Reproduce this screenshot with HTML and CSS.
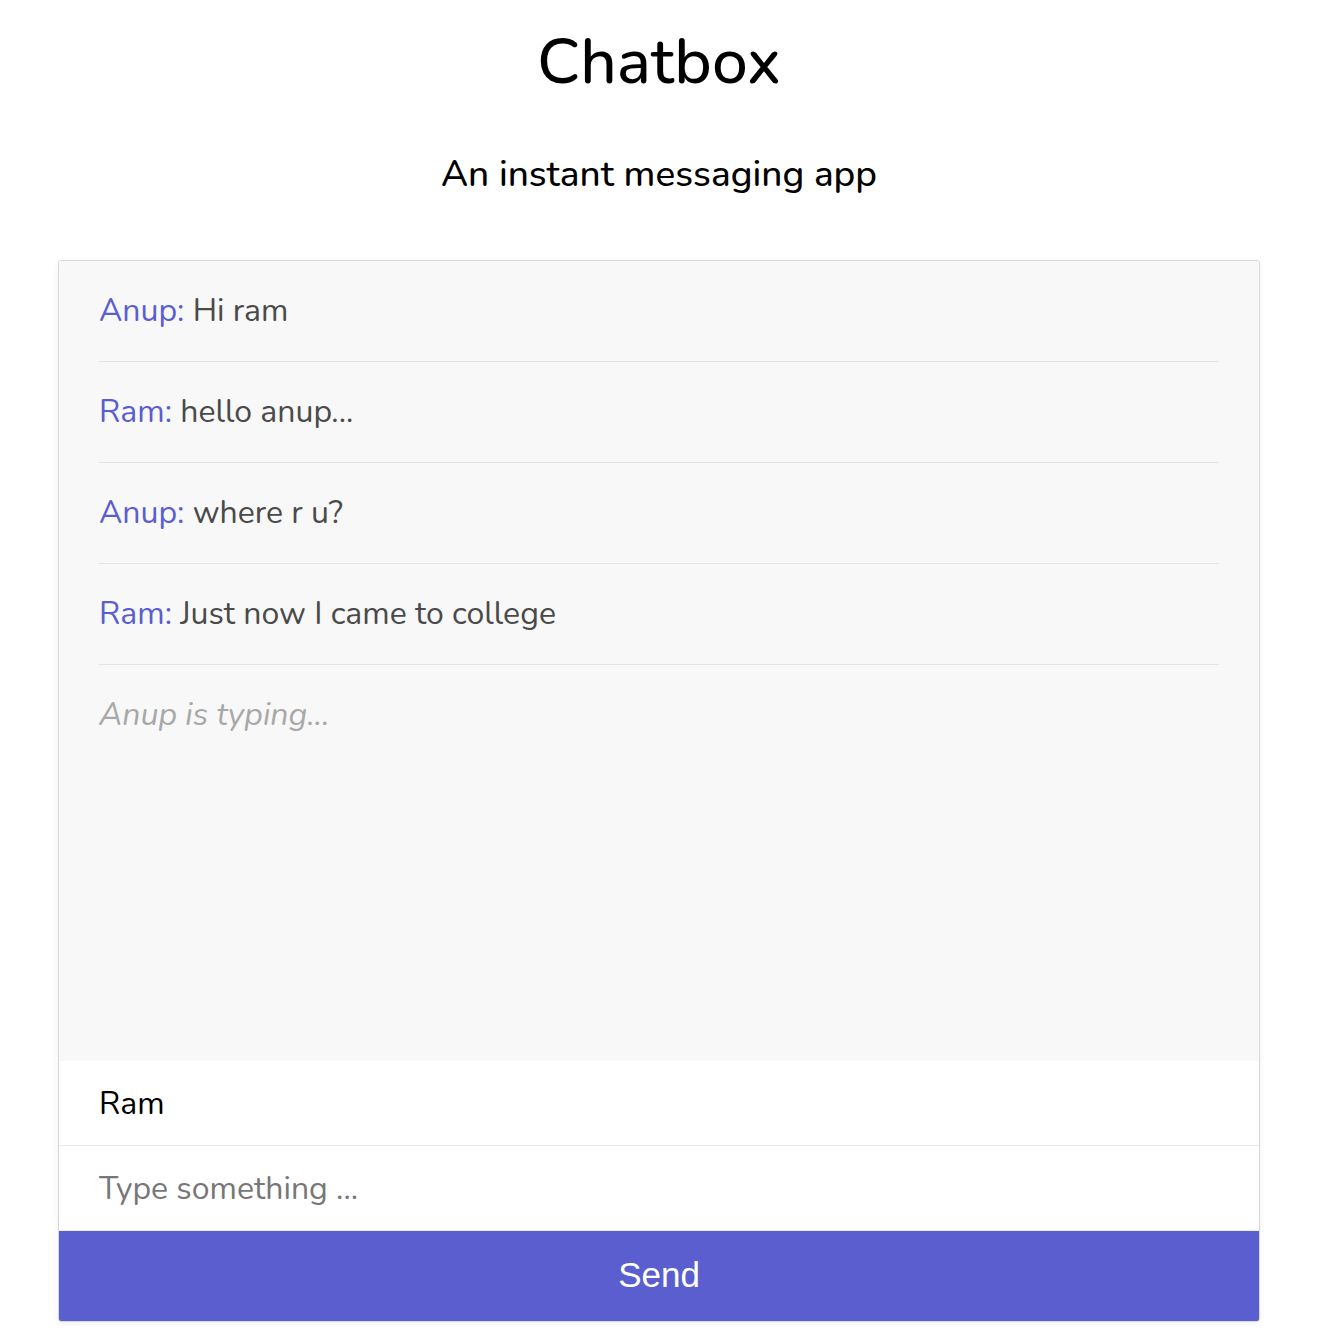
FILE: index.html
```html
<!DOCTYPE html>
<html lang="en">
<head>
<meta charset="utf-8">
<title>Chatbox</title>
<link rel="stylesheet" href="styles.css">
</head>
<body>
<main class="page">
  <h1 class="title">Chatbox</h1>
  <p class="subtitle">An instant messaging app</p>
  <section class="chat">
    <div class="messages">
      <div class="msg"><span class="who">Anup:</span> Hi ram</div>
      <div class="msg"><span class="who">Ram:</span> hello anup...</div>
      <div class="msg"><span class="who">Anup:</span> where r u?</div>
      <div class="msg"><span class="who">Ram:</span> Just now I came to college</div>
      <div class="typing">Anup is typing...</div>
    </div>
    <input class="field name" type="text" value="Ram">
    <input class="field text" type="text" placeholder="Type something ...">
    <button class="send">Send</button>
  </section>
</main>
</body>
</html>
```

FILE: styles.css
```css
* { box-sizing: border-box; }
html, body { margin: 0; padding: 0; background: #fff; }
body { font-family: "Nunito", "Lato", "Open Sans", sans-serif; color: #000; }
.page { padding: 0 64px 20px 58px; display: flex; flex-direction: column; align-items: center; }
.title { font-size: 64px; font-weight: 500; margin: 22px 0 0; line-height: 80px; }
.subtitle { font-size: 37px; font-weight: 500; margin: 48px 0 0; line-height: 48px; }
.chat { width: 1202px; margin-top: 62px; border: 1px solid #d8d8d8; border-radius: 3px; box-shadow: 0 2px 6px rgba(0,0,0,0.06); overflow: hidden; display: flex; flex-direction: column; }
.messages { height: 800px; background: #f8f8f8; padding: 0 40px; }
.msg { font-size: 32px; line-height: 40px; padding: 30px 0; border-bottom: 1px solid #e4e4e4; color: #4a4a4a; }
.who { color: #5a5ecf; }
.typing { font-size: 32px; line-height: 40px; padding: 30px 0; color: #a8a8a8; font-style: italic; }
.field { display: block; width: 100%; height: 85px; border: none; border-bottom: 1px solid #eaeaea; padding: 0 40px; font-family: inherit; font-size: 32px; color: #000; background: #fff; outline: none; }
.field::placeholder { color: #777; }
.send { display: block; width: 100%; height: 90px; border: none; padding: 0 0 2px; background: #5a5ecf; color: #fff; font-family: "Liberation Sans", Arial, sans-serif; font-size: 35px; line-height: 86px; }
```
